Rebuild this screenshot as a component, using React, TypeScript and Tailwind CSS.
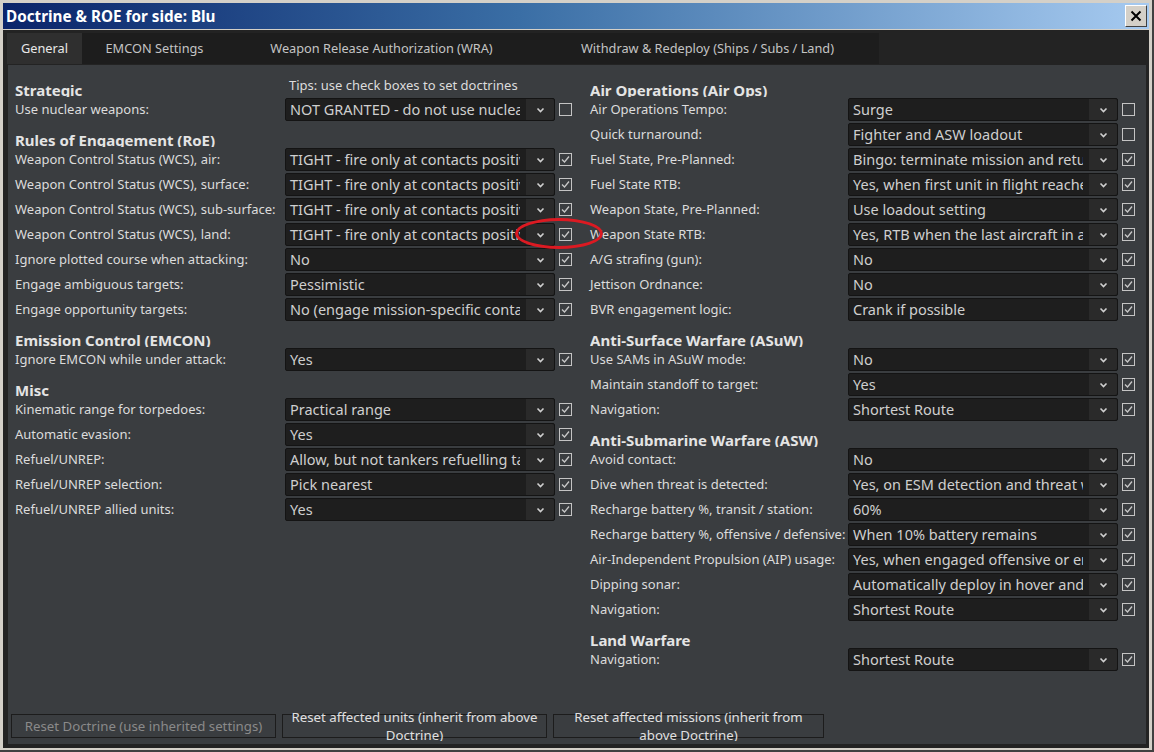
import React from "react";

type Row =
  | { kind: "head"; text: string; tip?: string }
  | { kind: "row"; label: string; value: string; checked: boolean };

const h = (text: string, tip?: string): Row => ({ kind: "head", text, tip });
const r = (label: string, value: string, checked = true): Row => ({ kind: "row", label, value, checked });

const TIGHT = "TIGHT - fire only at contacts positively identified as hostile";

const leftRows: Row[] = [
  h("Strategic", "Tips: use check boxes to set doctrines"),
  r("Use nuclear weapons:", "NOT GRANTED - do not use nuclear weapons", false),
  h("Rules of Engagement (RoE)"),
  r("Weapon Control Status (WCS), air:", TIGHT),
  r("Weapon Control Status (WCS), surface:", TIGHT),
  r("Weapon Control Status (WCS), sub-surface:", TIGHT),
  r("Weapon Control Status (WCS), land:", TIGHT),
  r("Ignore plotted course when attacking:", "No"),
  r("Engage ambiguous targets:", "Pessimistic"),
  r("Engage opportunity targets:", "No (engage mission-specific contacts only)"),
  h("Emission Control (EMCON)"),
  r("Ignore EMCON while under attack:", "Yes"),
  h("Misc"),
  r("Kinematic range for torpedoes:", "Practical range"),
  r("Automatic evasion:", "Yes"),
  r("Refuel/UNREP:", "Allow, but not tankers refuelling tankers"),
  r("Refuel/UNREP selection:", "Pick nearest"),
  r("Refuel/UNREP allied units:", "Yes"),
];

const rightRows: Row[] = [
  h("Air Operations (Air Ops)"),
  r("Air Operations Tempo:", "Surge", false),
  r("Quick turnaround:", "Fighter and ASW loadout", false),
  r("Fuel State, Pre-Planned:", "Bingo: terminate mission and return to base"),
  r("Fuel State RTB:", "Yes, when first unit in flight reaches Bingo"),
  r("Weapon State, Pre-Planned:", "Use loadout setting"),
  r("Weapon State RTB:", "Yes, RTB when the last aircraft in a flight is Winchester"),
  r("A/G strafing (gun):", "No"),
  r("Jettison Ordnance:", "No"),
  r("BVR engagement logic:", "Crank if possible"),
  h("Anti-Surface Warfare (ASuW)"),
  r("Use SAMs in ASuW mode:", "No"),
  r("Maintain standoff to target:", "Yes"),
  r("Navigation:", "Shortest Route"),
  h("Anti-Submarine Warfare (ASW)"),
  r("Avoid contact:", "No"),
  r("Dive when threat is detected:", "Yes, on ESM detection and threat within range"),
  r("Recharge battery %, transit / station:", "60%"),
  r("Recharge battery %, offensive / defensive:", "When 10% battery remains"),
  r("Air-Independent Propulsion (AIP) usage:", "Yes, when engaged offensive or engaged defensive"),
  r("Dipping sonar:", "Automatically deploy in hover and cruise"),
  r("Navigation:", "Shortest Route"),
  h("Land Warfare"),
  r("Navigation:", "Shortest Route"),
];

const tabs = [
  { name: "General", w: "w-[75px]", active: true },
  { name: "EMCON Settings", w: "w-[145px]" },
  { name: "Weapon Release Authorization (WRA)", w: "w-[309px]" },
  { name: "Withdraw & Redeploy (Ships / Subs / Land)", w: "w-[343px]" },
];

function Checkbox({ checked }: { checked: boolean }) {
  return (
    <div className="w-[13px] h-[13px] border border-[#c4c4c4] flex items-center justify-center shrink-0">
      {checked && (
        <svg width="11" height="11" viewBox="0 0 11 11">
          <path d="M2 5.5 L4.5 8 L9 2.5" fill="none" stroke="#c8c8c8" strokeWidth="1.3" />
        </svg>
      )}
    </div>
  );
}

function Dropdown({ value, w }: { value: string; w: string }) {
  return (
    <div className={`${w} h-[23px] flex rounded-[2px] border border-[#141414] bg-[#1e1e1e] shrink-0`}>
      <div className="flex-1 min-w-0 mr-[6px] overflow-hidden whitespace-nowrap pl-[4px] text-[14.5px] leading-[20px] text-[#cfcfcf]">
        {value}
      </div>
      <div className="w-[28px] bg-[#2a2a2a] flex items-center justify-center rounded-r-[2px]">
        <svg width="9" height="6" viewBox="0 0 9 6">
          <path d="M1.5 1.5 L4.5 4.5 L7.5 1.5" fill="none" stroke="#d0d0d0" strokeWidth="1.6" />
        </svg>
      </div>
    </div>
  );
}

function Column({ rows, labelW, ddW, gap }: { rows: Row[]; labelW: string; ddW: string; gap: string }) {
  return (
    <div className="flex flex-col">
      {rows.map((row, i) =>
        row.kind === "head" ? (
          <div key={i} className="h-[25px] flex overflow-hidden">
            <div className={`${labelW} shrink-0 pt-[9px] text-[15px] leading-[19px] font-bold text-[#e4e4e4] whitespace-nowrap`}>
              {row.text}
            </div>
            {row.tip && (
              <div className="pl-[4px] pt-[4px] text-[13px] leading-[18px] text-[#dcdcdc] whitespace-nowrap">{row.tip}</div>
            )}
          </div>
        ) : (
          <div key={i} className="h-[25px] flex items-center">
            <div className={`${labelW} shrink-0 pt-[1px] text-[13px] text-[#dcdcdc] whitespace-nowrap`}>{row.label}</div>
            <Dropdown value={row.value} w={ddW} />
            <div className={gap} />
            <Checkbox checked={row.checked} />
          </div>
        )
      )}
    </div>
  );
}

function ResetButton({ text, w, px, muted }: { text: string; w: string; px: string; muted?: boolean }) {
  return (
    <div className={`${w} h-[30px] overflow-hidden flex items-center`}>
      <div
        className={`w-full h-[24px] border border-[#1c1c1c] bg-[#3a3d40] flex items-center justify-center text-center ${px} text-[13.25px] leading-[18px] ${
          muted ? "text-[#8a8a8a]" : "text-[#e0e0e0]"
        }`}
      >
        <span>{text}</span>
      </div>
    </div>
  );
}

export default function App() {
  return (
    <div className="relative w-[1154px] h-[752px] overflow-hidden bg-[#d4d0c8] border-r-2 border-b-2 border-[#404040] pl-[3px] pr-[3px] pt-[3px] pb-[2px] flex flex-col font-['Noto_Sans',sans-serif]">
      {/* title bar */}
      <div className="h-[26px] mb-[1px] shrink-0 flex items-center justify-between pl-[3px] pr-[2px] bg-[linear-gradient(to_right,#0a246a,#3a6ea5_45%,#a6caf0)]">
        <span className="text-white font-bold text-[15.25px]">Doctrine &amp; ROE for side: Blu</span>
        <div className="w-[22px] h-[22px] bg-[#d4d0c8] border border-t-white border-l-white border-r-[#404040] border-b-[#404040] flex items-center justify-center">
          <svg width="12" height="12" viewBox="0 0 12 12">
            <path d="M1.5 1.5 L10.5 10.5 M10.5 1.5 L1.5 10.5" stroke="#000" strokeWidth="2" />
          </svg>
        </div>
      </div>

      {/* body */}
      <div className="flex-1 flex flex-col bg-[#232323] pl-[5px] pr-[3px] pb-[4px]">
        <div className="h-[35px] shrink-0 flex items-end pb-[1px] -ml-[1px]">
          {tabs.map((t) => (
            <div
              key={t.name}
              className={`${t.w} h-[31px] flex items-center justify-center text-[12.75px] whitespace-nowrap ${
                t.active ? "bg-[#2f2f2f] text-[#e8e8e8]" : "bg-[#1d1d1d] text-[#c4c4c4]"
              }`}
            >
              {t.name}
            </div>
          ))}
        </div>

        <div className="flex-1 bg-[#3a3d40] flex flex-col pt-[7px] pb-[3px]">
          <div className="flex pl-[7px]">
            <div className="w-[575px] shrink-0">
              <Column rows={leftRows} labelW="w-[270px]" ddW="w-[270px]" gap="w-[4px]" />
            </div>
            <Column rows={rightRows} labelW="w-[258px]" ddW="w-[270px]" gap="w-[4px]" />
          </div>

          <div className="mt-auto flex gap-[6px] pl-[3px]">
            <ResetButton text="Reset Doctrine (use inherited settings)" w="w-[265px]" px="px-[12px]" muted />
            <ResetButton text="Reset affected units (inherit from above Doctrine)" w="w-[265px]" px="px-[1px]" />
            <ResetButton text="Reset affected missions (inherit from above Doctrine)" w="w-[271px]" px="px-[12px]" />
          </div>
        </div>
      </div>

      {/* red annotation ring */}
      <div className="absolute left-[515px] top-[218px] w-[88px] h-[31px] rounded-[50%] border-[3px] border-[#dc1a22]" />
    </div>
  );
}
